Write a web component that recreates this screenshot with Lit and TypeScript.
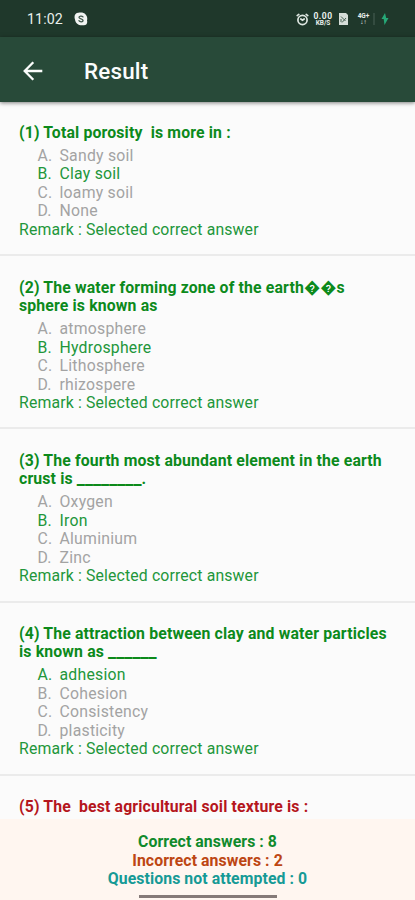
import { LitElement, html, css } from "lit";
import { customElement, property } from "lit/decorators.js";

interface Question {
  lines: string[];
  blank?: string;
  tail?: string;
  options: string[];
  picked: number;
  correct: boolean;
}

const QUESTIONS: Question[] = [
  { lines: ["(1) Total porosity  is more in :"], options: ["Sandy soil", "Clay soil", "loamy soil", "None"], picked: 1, correct: true },
  { lines: ["(2) The water forming zone of the earth\uFFFD\uFFFDs", "sphere is known as"], options: ["atmosphere", "Hydrosphere", "Lithosphere", "rhizospere"], picked: 1, correct: true },
  { lines: ["(3) The fourth most abundant element in the earth", "crust is "], blank: "________", tail: ".", options: ["Oxygen", "Iron", "Aluminium", "Zinc"], picked: 1, correct: true },
  { lines: ["(4) The attraction between clay and water particles", "is known as "], blank: "______", options: ["adhesion", "Cohesion", "Consistency", "plasticity"], picked: 0, correct: true },
  { lines: ["(5) The  best agricultural soil texture is :"], options: [], picked: -1, correct: false },
];

@customElement("status-bar")
export class StatusBar extends LitElement {
  static styles = css`
    :host { display: flex; align-items: center; box-sizing: border-box; height: 37px; padding: 1px 26px 0 27px; background: #1f382b; color: #e9efeb; flex: none; }
    .time { font-size: 14.2px; line-height: 18px; width: 47px; letter-spacing: 0.1px; }
    .right { margin-left: auto; display: flex; align-items: center; }
    svg { display: block; }
    .speed { display: flex; flex-direction: column; align-items: center; width: 20px; margin-left: 4px; font-weight: 700; font-size: 8.5px; line-height: 8px; letter-spacing: 0.5px; }
    .unit { font-size: 6.5px; line-height: 7px; letter-spacing: 0; }
    .sim { margin-left: 6px; }
    .net { display: flex; flex-direction: column; align-items: center; width: 13px; margin-left: 9px; font-weight: 700; font-size: 6.5px; line-height: 6.5px; }
    .bar { width: 2px; height: 12px; margin-left: 3px; background: #344c40; }
    .bolt { margin-left: 6px; }
  `;
  render() {
    return html`
      <span class="time">11:02</span>
      <svg width="14" height="14" viewBox="0 0 14 14">
        <path d="M4.3 .8C7 0 10 .5 11.6 2.4 13.2 4 13.6 6.500 13 8.600 14 11.800 11.600 14 8.800 13.200 5 13.700 1.400 11.400 1 7.400-.4 4 1.400.8 4.300.8Z" fill="#f1f4f2" />
        <path d="M9 4.900C7.800 3.500 4.900 3.900 5 5.500c.1 1.600 4.100 1.100 4.100 2.900C9 10.200 5.900 10.200 4.900 8.700" fill="none" stroke="#40574b" stroke-width="1.300" stroke-linecap="round" />
      </svg>
      <div class="right">
        <svg width="13" height="13" viewBox="0 0 13 13" fill="none" stroke="#dfe7e2" stroke-width="1.700" stroke-linecap="round">
          <circle cx="6.500" cy="7" r="4.600" />
          <path d="M1.200 2.600 2.800 1.400M11.800 2.600 10.200 1.400M4.800 6l1.700 1.300L8.200 6" />
        </svg>
        <span class="speed"><span>0.00</span><span class="unit">KB/S</span></span>
        <svg class="sim" width="9" height="12" viewBox="0 0 9 12">
          <path d="M0 0h7l2 2v10H0Z" fill="#d5ddd8" />
          <path d="M2 3.500 6.500 8M3 9.500 7 5M2 6v3" stroke="#476052" stroke-width="1" fill="none" />
        </svg>
        <span class="net"><span>4G+</span><span>↓↑</span></span>
        <span class="bar"></span>
        <svg class="bolt" width="8" height="12" viewBox="0 0 8 12"><path d="M4 0 .5 6h2.200L3.500 12 7.500 5H5.200Z" fill="#26a877" /></svg>
      </div>`;
  }
}

@customElement("title-bar")
export class TitleBar extends LitElement {
  static styles = css`
    :host { display: flex; align-items: center; box-sizing: border-box; height: 65px; padding: 3px 0 0 23px; background: #284a39; color: #fbfdfc; flex: none; box-shadow: 0 1px 4px rgba(0, 0, 0, 0.5); z-index: 1; }
    svg { display: block; flex: none; margin-top: -1px; }
    .title { margin-left: 41px; font-size: 22.400px; line-height: 28px; font-weight: 500; letter-spacing: 0.2px; }
  `;
  render() {
    return html`
      <svg width="20" height="20" viewBox="0 0 20 20" fill="none" stroke="#fbfdfc" stroke-width="2.300"><path d="M19.300 10H2M10.300 1.300 1.700 10l8.600 8.700" /></svg>
      <span class="title">Result</span>`;
  }
}

@customElement("question-item")
export class QuestionItem extends LitElement {
  @property({ attribute: false }) question!: Question;
  static styles = css`
    :host { display: block; box-sizing: border-box; padding: 22.400px 19px 14.800px; border-bottom: 2px solid #ebebeb; font-size: 15.800px; line-height: 18.500px; color: #22963a; }
    .heading { font-weight: 700; color: #0c8a1b; white-space: pre; letter-spacing: 0.150px; }
    .blank { font-size: 18.200px; line-height: 0; letter-spacing: 0; }
    .wrong { color: #b5161d; }
    .options { margin-top: 4.500px; }
    .option { display: grid; grid-template-columns: 22px 1fr; padding-left: 18.500px; color: #a3a3a3; letter-spacing: 0.230px; }
    .picked { color: #22963a; }
    .remark { letter-spacing: 0.150px; }
  `;
  render() {
    const q = this.question;
    const last = q.lines.length - 1;
    return html`
      <div class="heading ${q.correct ? "" : "wrong"}">${q.lines.map((l, i) => html`<div>${l}${i === last && q.blank ? html`<span class="blank">${q.blank}</span>${q.tail ?? ""}` : ""}</div>`)}</div>
      ${q.options.length
        ? html`<div class="options">
              ${q.options.map((o, i) => html`<div class="option ${i === q.picked ? "picked" : ""}"><span>${"ABCD"[i]}.</span><span>${o}</span></div>`)}
            </div>
            <div class="remark">Remark : Selected correct answer</div>`
        : ""}`;
  }
}

@customElement("app-root")
export class AppRoot extends LitElement {
  static styles = css`
    :host { display: flex; flex-direction: column; width: 415px; height: 900px; overflow: hidden; background: #fbfbfb; font-family: Roboto, sans-serif; }
    .list { flex: 1; min-height: 0; overflow: hidden; margin-top: -0.500px; }
    .summary { flex: none; box-sizing: border-box; height: 81px; padding-top: 14px; background: #fff6f0; text-align: center; font-size: 15.800px; line-height: 18.500px; font-weight: 700; letter-spacing: 0.080px; display: flex; flex-direction: column; align-items: center; }
    .good { color: #108a2c; }
    .bad { color: #bd4613; }
    .none { color: #169a96; }
    .handle { width: 138px; height: 3px; margin-top: 6.500px; background: #857a78; }
  `;
  render() {
    return html`
      <status-bar></status-bar>
      <title-bar></title-bar>
      <div class="list">${QUESTIONS.map((q) => html`<question-item .question=${q}></question-item>`)}</div>
      <div class="summary">
        <span class="good">Correct answers : 8</span>
        <span class="bad">Incorrect answers : 2</span>
        <span class="none">Questions not attempted : 0</span>
        <span class="handle"></span>
      </div>`;
  }
}
